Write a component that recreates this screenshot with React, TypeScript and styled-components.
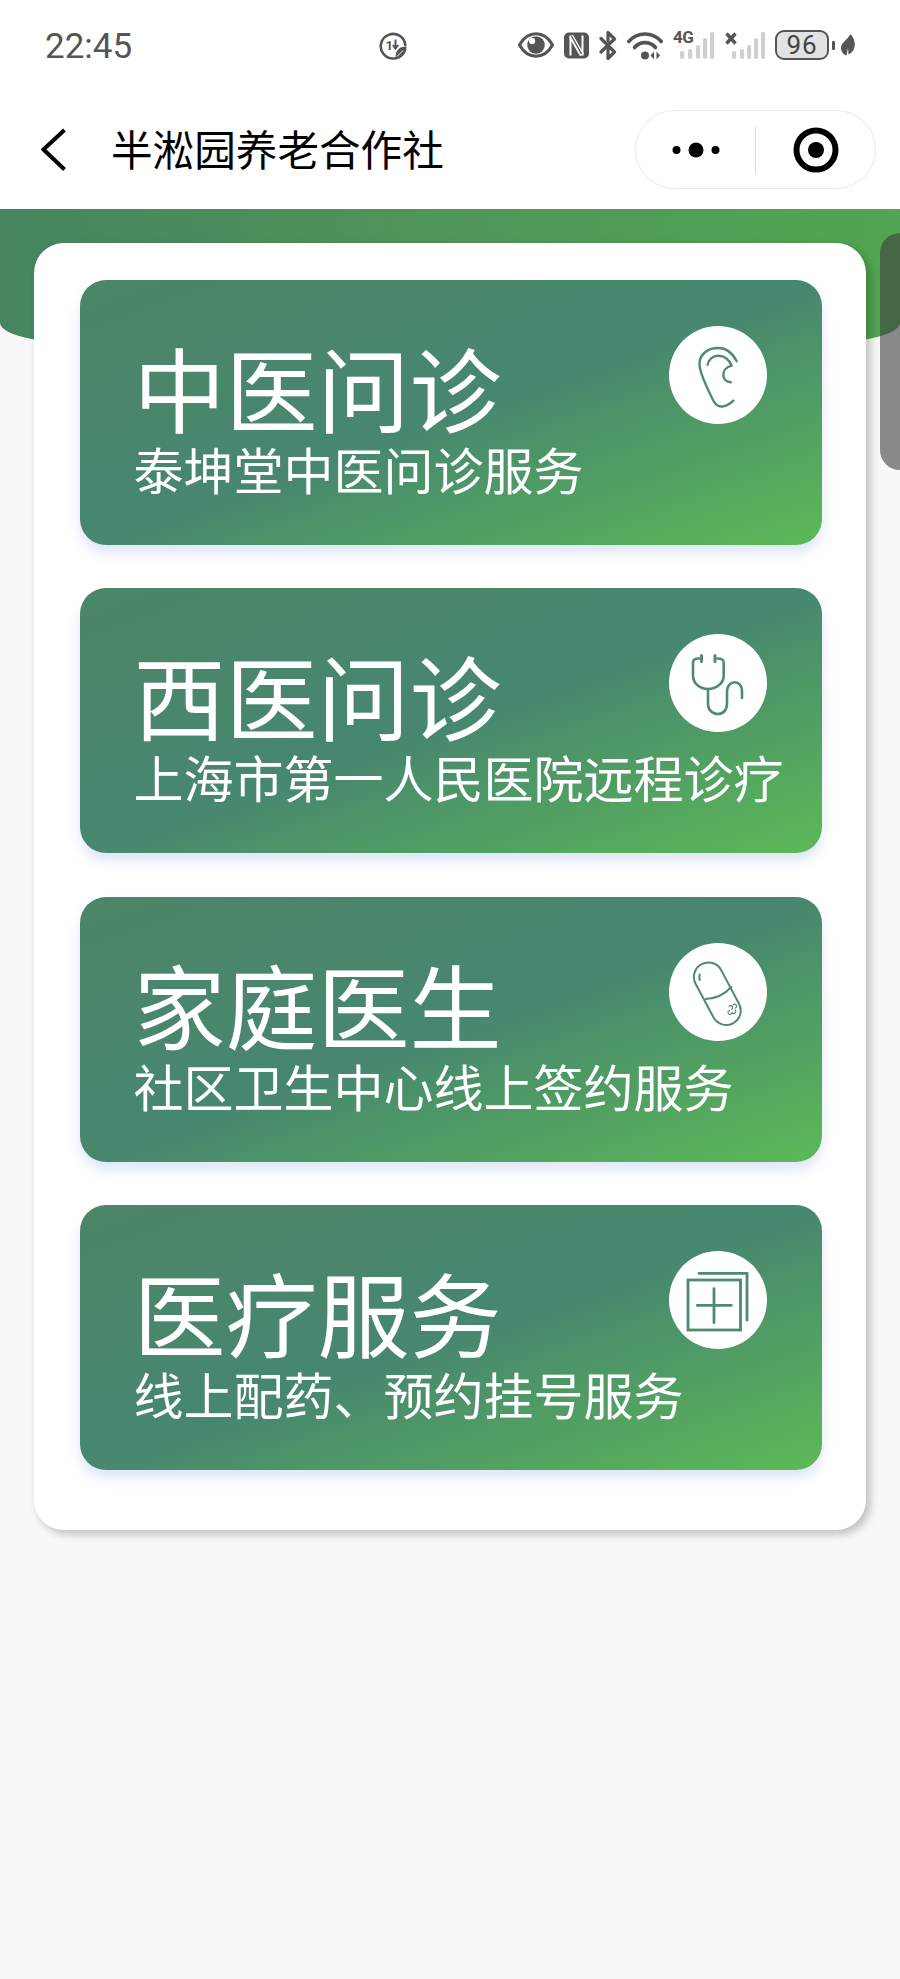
import React from "react";
import styled, { createGlobalStyle } from "styled-components";

const CJK = `"Noto Sans CJK SC", "Noto Sans", sans-serif`;
const INK = "#555555";
const BAR_OFF = "#cfcfcf";
const ICON = "#4d8a72";

const Global = createGlobalStyle`
  html, body { margin: 0; padding: 0; background: #f8f8f8; }
  * { box-sizing: border-box; }
`;

const Page = styled.div`
  position: relative;
  width: 900px;
  height: 1979px;
  overflow: hidden;
  background: #f8f8f8;
  font-family: ${CJK};
`;

const Top = styled.header`
  background: #ffffff;
`;

const StatusBar = styled.div`
  height: 90px;
  display: flex;
  align-items: center;
  padding: 2px 45px 0;
`;

const Clock = styled.span`
  width: 334px;
  font-family: Roboto, sans-serif;
  font-size: 35px;
  line-height: 1;
  color: ${INK};
`;

const StatusIcons = styled.div`
  margin-left: auto;
  margin-top: -2px;
  display: flex;
  align-items: center;
  gap: 10px;
`;

const Network = styled.div`
  position: relative;
  width: 41px;
  height: 30px;
`;

const NetLabel = styled.span`
  position: absolute;
  left: 0;
  top: -1px;
  font-family: Roboto, sans-serif;
  font-weight: 700;
  font-size: 17px;
  line-height: 16px;
  color: ${INK};
  letter-spacing: -0.5px;
`;

const BatteryRow = styled.div`
  display: flex;
  align-items: center;
  gap: 3px;
`;

const BatteryBody = styled.div`
  width: 54px;
  height: 30px;
  border: 2.5px solid ${INK};
  border-radius: 9px;
  background: #e2e2e2;
  display: flex;
  align-items: center;
  justify-content: center;
  font-family: Roboto, sans-serif;
  font-size: 26px;
  line-height: 1;
  letter-spacing: 1px;
  color: #444444;
`;

const BatteryCap = styled.span`
  width: 3px;
  height: 9px;
  margin-right: 3px;
  background: ${INK};
  border-radius: 1px;
`;

const NavBar = styled.nav`
  height: 119px;
  display: flex;
  align-items: center;
  padding: 0 24px 0 41px;
`;

const NavTitle = styled.h1`
  margin: -3px 0 0 44px;
  font-size: 41.6px;
  line-height: 60px;
  font-weight: 400;
  color: #000000;
  flex: 1;
  white-space: nowrap;
`;

const Capsule = styled.div`
  width: 241px;
  height: 79px;
  border: 1.5px solid #e9e9e9;
  border-radius: 40px;
  background: #ffffff;
  display: flex;
  align-items: center;
`;

const CapsuleCell = styled.div`
  flex: 1;
  display: flex;
  align-items: center;
  justify-content: center;
`;

const CapsuleDivider = styled.span`
  width: 1px;
  height: 48px;
  background: #dddddd;
`;

const Banner = styled.div`
  height: 136px;
  background: linear-gradient(90deg, #46855f 0%, #4f9659 50%, #52a552 100%);
  border-radius: 0 0 100px 100px / 0 0 22px 22px;
`;

const Panel = styled.main`
  position: relative;
  margin: -102px 34px 0;
  height: 1287px;
  padding: 37px 44px 0 45.5px;
  background: #ffffff;
  border-radius: 30px;
  box-shadow: 4px 4px 10px rgba(0, 0, 0, 0.24);
  display: flex;
  flex-direction: column;
  gap: 43.4px;
`;

const ServiceCard = styled.article`
  flex: none;
  height: 265px;
  border-radius: 26px;
  padding: 46px 55px 0 54px;
  display: flex;
  align-items: flex-start;
  background: linear-gradient(to bottom right, #4c8568 0%, #47876f 50%, #5cb956 100%);
  box-shadow: 0 8px 12px rgba(110, 140, 225, 0.22);
`;

const CardText = styled.div`
  flex: 1;
  min-width: 0;
  color: #ffffff;
  padding-top: 14px;
  white-space: nowrap;
`;

const CardTitle = styled.h2`
  margin: 0;
  font-size: 92px;
  line-height: 92px;
  font-weight: 400;
`;

const CardSub = styled.p`
  margin: 8px 0 0;
  font-size: 50px;
  line-height: 56px;
  font-weight: 400;
`;

const IconDisc = styled.div`
  flex: none;
  width: 98px;
  height: 98px;
  border-radius: 50%;
  background: #ffffff;
`;

const NextPeek = styled.div`
  position: absolute;
  left: 880px;
  top: 233px;
  width: 40px;
  height: 237px;
  border-radius: 24px;
  background: rgba(60, 60, 60, 0.594);
`;

const Line = (p: React.SVGProps<SVGSVGElement>) => (
  <svg
    fill="none"
    stroke={ICON}
    strokeWidth={2.4}
    strokeLinecap="round"
    strokeLinejoin="round"
    viewBox="0 0 98 98"
    width={98}
    height={98}
    {...p}
  />
);

const EarIcon = () => (
  <Line>
    <path d="M67.7 35.3C63 26 56 22 49.3 22C38 22 30 29 30.5 39C31 47 38 62 44 74C47 80 51 81 54.3 80.3C58 79.7 61 78 64.3 74.7" />
    <path d="M38.7 38.7C39.5 33 44 29.7 49.3 29.7C55.5 29.7 60 33.5 62.7 39.7C57 41 54 45 54.3 49.7C54.6 53.5 58 56 61.7 56.3" />
  </Line>
);

const StethIcon = () => (
  <Line strokeWidth={2.6}>
    <path d="M30 24.5C26.5 24.3 24 25.5 24 28.5V41.7C24 49.5 31 55 39 55C47 55 54.7 49.5 54.7 41.7V28.5C54.7 25.5 52 24.3 48.5 24.5" />
    <path d="M39 55V70C39 76 43.5 80 49 80C54 80 58 76 58 70V57C58 52 61.5 48.3 65.7 48.3C70 48.3 73 52 73 57V64" />
    <path d="M32.5 21.5V27.5M46 21.5V27.5" strokeWidth={3} />
  </Line>
);

const PillIcon = () => (
  <Line strokeWidth={2}>
    <rect x={-14.5} y={-33.5} width={29} height={67} rx={14.5} transform="translate(48.3 50.7) rotate(-28)" />
    <path d="M36.7 56C46 55.5 56 51 62.3 44" />
    <path d="M30.7 31.5C30.2 33.5 30.2 35 30.7 37" />
    <path d="M60 63.5a2 2 0 1 1 2.8 2.8M64 62a2 2 0 1 1 2.5 3M66 67a2 2 0 1 1-3 2.5M60.5 67.5a2 2 0 1 0 2.5 2" strokeWidth={1.2} />
  </Line>
);

const PlusIcon = () => (
  <Line strokeWidth={2.8} strokeLinecap="round" strokeLinejoin="miter">
    <rect x={19} y={29} width={52.5} height={50} />
    <path d="M30 22.3H78V69" />
    <path d="M28.3 54.3H62.3M45 37.7V71.7" />
  </Line>
);

const CenterStatusIcon = () => (
  <svg width={28} height={28} viewBox="0 0 28 28" fill="none">
    <path d="M24 21.5A12.3 12.3 0 1 1 26.3 13" stroke={INK} strokeWidth={2.6} strokeLinecap="round" />
    <text x={6.5} y={18} fontFamily="Roboto, sans-serif" fontWeight={700} fontSize={13} fill={INK}>1</text>
    <path d="M16.5 7.5V15M13.8 13l2.7 3.5 2.7-3.5" stroke={INK} strokeWidth={2} />
    <path d="M27.5 14.5C21 14.5 16.5 17.5 16.5 25.5C23.5 26.5 27.5 22 27.5 14.5Z" fill={INK} />
    <path d="M18 24.5L24 18.5" stroke="#fff" strokeWidth={0.9} />
  </svg>
);

const EyeIcon = () => (
  <svg width={36} height={26} viewBox="0 0 37 26">
    <path d="M1.5 13C6 5 11.5 1.5 18.5 1.5S31 5 35.5 13C31 21 25.5 24.5 18.5 24.5S6 21 1.5 13Z" fill="#fff" stroke={INK} strokeWidth={3.2} strokeLinejoin="round" />
    <circle cx={18.5} cy={13} r={9} fill={INK} />
    <circle cx={14.5} cy={9} r={3.2} fill="#fff" />
  </svg>
);

const NfcIcon = () => (
  <svg width={25} height={27} viewBox="0 0 25 27">
    <rect x={0} y={0.5} width={25} height={26} rx={5} fill={INK} />
    <path d="M6.5 3.5V23.5M18.5 3.5V23.5" stroke="#fff" strokeWidth={2} fill="none" />
    <path d="M7 4L18 23" stroke="#fff" strokeWidth={4.5} fill="none" />
    <path d="M7.5 4L17.5 22" stroke={INK} strokeWidth={1.4} fill="none" />
  </svg>
);

const BluetoothIcon = () => (
  <svg width={18} height={29} viewBox="0 0 18 29" fill="none">
    <path d="M2 7.5L15.5 21 9 27.5V14" stroke={INK} strokeWidth={3.2} strokeLinecap="round" strokeLinejoin="round" />
    <path d="M2 21L15.5 8 9 1.5V10" stroke={INK} strokeWidth={3.2} strokeLinecap="round" strokeLinejoin="round" />
  </svg>
);

const WifiIcon = () => (
  <svg width={36} height={29} viewBox="0 0 36 29" fill="none">
    <path d="M1.8 10.5C10.5 0.5 25.5 0.5 34.2 10.5" stroke={INK} strokeWidth={3.6} strokeLinecap="round" />
    <path d="M7.5 16.5C13 10 23 10 28.5 16.5" stroke={INK} strokeWidth={3.6} strokeLinecap="round" />
    <circle cx={18} cy={24.5} r={4} fill={INK} />
    <path d="M27 20.5L23.5 24.5 27 28.5ZM29.5 20.5L33 24.5 29.5 28.5Z" fill={INK} />
  </svg>
);

const SignalBars = ({ xs, tops }: { xs: number[]; tops: number[] }) => (
  <svg width={41} height={30} viewBox="0 0 41 30">
    {xs.map((x, i) => (
      <rect key={x} x={x} y={tops[i]} width={4.2} height={29 - tops[i]} rx={2.1} fill={BAR_OFF} />
    ))}
  </svg>
);

const CrossMark = () => (
  <svg width={12} height={13} viewBox="0 0 12 13" style={{ position: "absolute", left: 1, top: 2 }}>
    <path d="M1.5 1.5L10.5 11.5M10.5 1.5L1.5 11.5" stroke={INK} strokeWidth={3.4} />
  </svg>
);

const LeafIcon = () => (
  <svg width={14} height={23} viewBox="0 0 14 23">
    <path d="M9.5 0C13 4 14.5 9 13.5 13C12.5 17.5 9 20 7.5 20.5L7 14 5.5 21.5C2 20.5 0 17 0 14C0 8.5 6.5 6 9.5 0Z" fill={INK} />
  </svg>
);

const MoreDots = () => (
  <svg width={48} height={18} viewBox="0 0 48 18" fill="#000">
    <circle cx={4.5} cy={9} r={4} />
    <circle cx={24} cy={9} r={7.5} />
    <circle cx={43.5} cy={9} r={4} />
  </svg>
);

const TargetIcon = () => (
  <svg width={46} height={46} viewBox="0 0 46 46" fill="none">
    <circle cx={23} cy={23} r={19.5} stroke="#000" strokeWidth={6} />
    <circle cx={23} cy={23} r={8} fill="#000" />
  </svg>
);

const BackIcon = () => (
  <svg width={26} height={44} viewBox="0 0 26 44" fill="none">
    <path d="M23.5 2L2.5 21.5L23.5 41.5" stroke="#000" strokeWidth={4} />
  </svg>
);

const services = [
  { title: "中医问诊", sub: "泰坤堂中医问诊服务", Icon: EarIcon },
  { title: "西医问诊", sub: "上海市第一人民医院远程诊疗", Icon: StethIcon },
  { title: "家庭医生", sub: "社区卫生中心线上签约服务", Icon: PillIcon },
  { title: "医疗服务", sub: "线上配药、预约挂号服务", Icon: PlusIcon },
];

export default function App() {
  return (
    <Page>
      <Global />
      <Top>
        <StatusBar>
          <Clock>22:45</Clock>
          <CenterStatusIcon />
          <StatusIcons>
            <EyeIcon />
            <NfcIcon />
            <BluetoothIcon />
            <WifiIcon />
            <Network>
              <NetLabel>4G</NetLabel>
              <SignalBars xs={[7, 15, 23, 30, 37]} tops={[21, 19, 15, 8, 2]} />
            </Network>
            <Network>
              <CrossMark />
              <SignalBars xs={[8, 16, 23, 30, 37]} tops={[21, 19, 15, 8, 2]} />
            </Network>
            <BatteryRow>
              <BatteryBody>96</BatteryBody>
              <BatteryCap />
              <LeafIcon />
            </BatteryRow>
          </StatusIcons>
        </StatusBar>
        <NavBar>
          <BackIcon />
          <NavTitle>半淞园养老合作社</NavTitle>
          <Capsule>
            <CapsuleCell><MoreDots /></CapsuleCell>
            <CapsuleDivider />
            <CapsuleCell><TargetIcon /></CapsuleCell>
          </Capsule>
        </NavBar>
      </Top>
      <Banner />
      <Panel>
        {services.map(({ title, sub, Icon }) => (
          <ServiceCard key={title}>
            <CardText>
              <CardTitle>{title}</CardTitle>
              <CardSub>{sub}</CardSub>
            </CardText>
            <IconDisc><Icon /></IconDisc>
          </ServiceCard>
        ))}
      </Panel>
      <NextPeek />
    </Page>
  );
}
